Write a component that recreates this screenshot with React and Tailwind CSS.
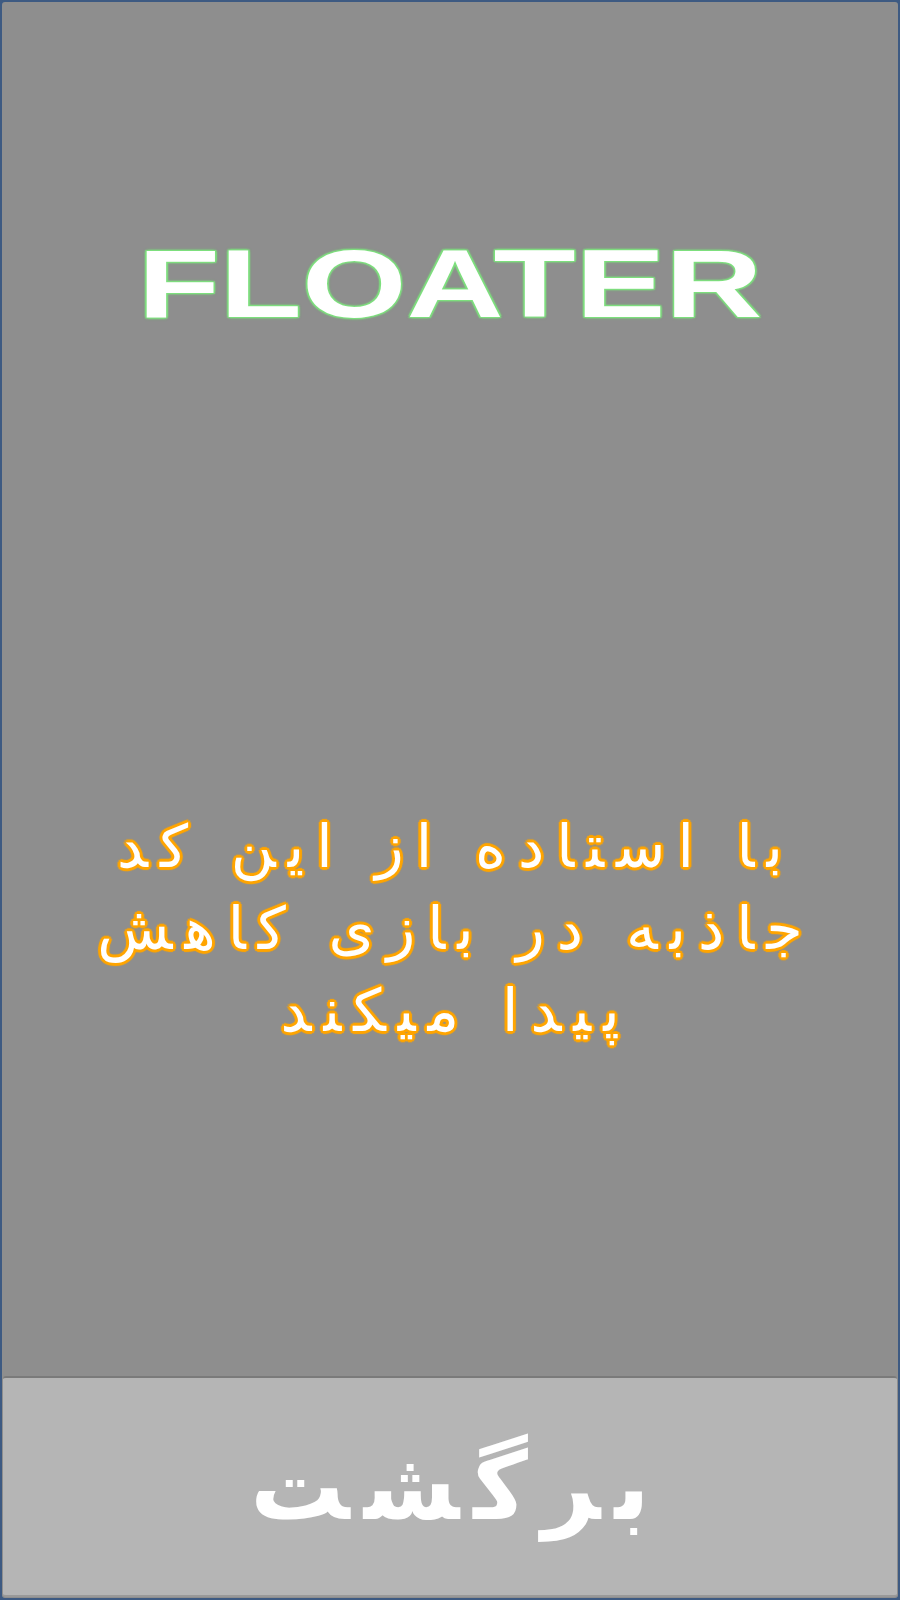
import React from 'react';

const greenGlow =
  '0 0 3px #7ee07e, 0 0 2px #7ee07e, 1px 1px 1px #7ee07e, -1px -1px 1px #7ee07e, 1px -1px 1px #7ee07e, -1px 1px 1px #7ee07e';
const orangeGlow =
  '0 0 3px #ffa500, 2px 2px 1px #ffa500, -2px -2px 1px #ffa500, 2px -2px 1px #ffa500, -2px 2px 1px #ffa500, 0 3px 1px #ffa500, 0 -3px 1px #ffa500, 3px 0 1px #ffa500, -3px 0 1px #ffa500';

const DUAL = 'بپتثجچحخسشصضطظعغفقکگلمنهیيكئ';
const ZWJ = '\u200d';
const isLetter = (c) => c && c !== ' ';

// spread the letters apart but keep their joined forms
function Spaced({ text, gap }) {
  const chars = Array.from(text);
  return chars.map((c, i) => {
    const prev = chars[i - 1];
    const next = chars[i + 1];
    const joinPrev = isLetter(c) && isLetter(prev) && DUAL.includes(prev);
    const joinNext = isLetter(c) && isLetter(next) && DUAL.includes(c);
    return (
      <span key={i} className={gap}>
        {(joinPrev ? ZWJ : '') + (c === ' ' ? '\u00a0' : c) + (joinNext ? ZWJ : '')}
      </span>
    );
  });
}

export default function App() {
  const lines = ['با استاده از این کد', 'جاذبه در بازی کاهش', 'پیدا میکند'];
  return (
    <div className="w-[900px] h-[1600px] bg-[#3d5a82] p-[2px]">
      <div className="h-full flex flex-col bg-[#8e8e8e] rounded-[3px] overflow-hidden">
        <div className="h-[1374px] flex flex-col items-center">
          <h1
            className="mt-[234px] text-white font-bold leading-none text-[96px] scale-x-[1.4]"
            style={{ fontFamily: '"Liberation Sans", Arial, sans-serif', textShadow: greenGlow }}
          >
            FLOATER
          </h1>
          <div
            dir="rtl"
            className="mt-[474px] flex flex-col items-center text-white text-[59px] leading-[82px]"
            style={{ fontFamily: '"DejaVu Sans", sans-serif', textShadow: orangeGlow }}
          >
            {lines.map((l) => (
              <p key={l} className="whitespace-nowrap">
                <Spaced text={l} gap="px-[6px]" />
              </p>
            ))}
          </div>
        </div>
        <button
          dir="rtl"
          className="flex-1 mx-[1px] mb-[1px] flex items-center justify-center bg-[#b5b5b5] border-t-2 border-[#7a7a7a] border-b-2 border-b-[#999] rounded-[3px] text-white text-[94px] font-bold"
          style={{ fontFamily: '"DejaVu Sans", sans-serif' }}
        >
          <span className="whitespace-nowrap">
            <Spaced text="برگشت" gap="px-[7px]" />
          </span>
        </button>
      </div>
    </div>
  );
}
